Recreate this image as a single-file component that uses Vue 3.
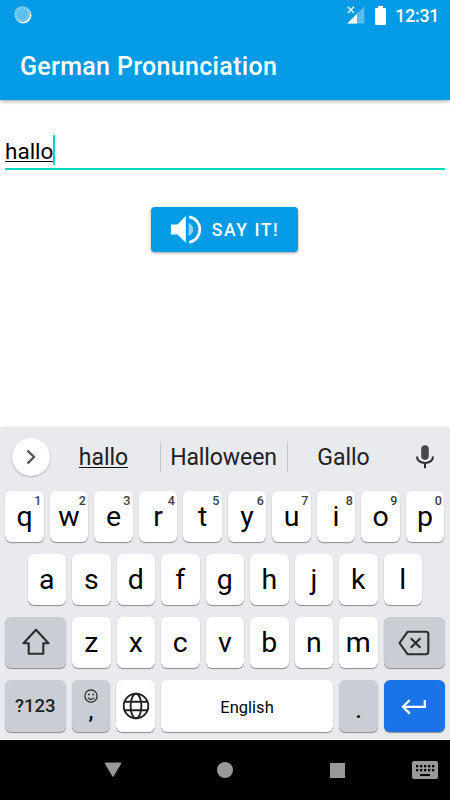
<script setup>
import { ref } from 'vue'

const text = ref('hallo')

const suggestions = ['hallo', 'Halloween', 'Gallo']

const topRow = [...'qwertyuiop'].map((letter, i) => ({ letter, hint: (i + 1) % 10 }))
const middleRow = [...'asdfghjkl']
const bottomRow = [...'zxcvbnm']

// keyboard dots in the nav bar icon
const dots = []
for (let row = 0; row < 2; row++) {
  for (let col = 0; col < 5; col++) {
    dots.push({ x: 4 + col * 4, y: 4 + row * 4 })
  }
}

const type = (letter) => {
  text.value += letter
}

const backspace = () => {
  text.value = text.value.slice(0, -1)
}
</script>

<template>
  <div class="phone">
    <header class="top">
      <div class="status">
        <svg class="sync" width="18" height="18" viewBox="0 0 18 18">
          <circle cx="9.2" cy="9.3" r="8.2" fill="#fff" />
          <circle cx="8.2" cy="8.2" r="8" fill="#5cbff1" />
          <circle cx="8.2" cy="8.2" r="6.7" fill="none" stroke="#a5dbf8" stroke-width="2.2" stroke-dasharray="1 1.6" />
        </svg>
        <svg class="signal" width="18" height="18" viewBox="0 0 18 18">
          <path d="M17.3 0.5V17.5H0.3Z" fill="#58bdf2" />
          <path d="M10 7.8V17.5H0.3Z" fill="#fff" />
          <path d="M0 0H8V6.5L6.5 8H0Z" fill="#039be5" />
          <path d="M0.8 0.8L7 7M7 0.8L0.8 7" stroke="#fff" stroke-width="1.3" />
        </svg>
        <svg class="battery" width="11" height="19" viewBox="0 0 11 19">
          <path d="M3 0H8V2H10Q11 2 11 3V18Q11 19 10 19H1Q0 19 0 18V3Q0 2 1 2H3Z" fill="#fff" />
        </svg>
        <span class="clock">12:31</span>
      </div>
      <h1>German Pronunciation</h1>
    </header>

    <main>
      <div class="field">
        <span class="typed">{{ text }}</span>
        <span class="cursor"></span>
      </div>
      <button class="say">
        <svg width="32" height="30" viewBox="0 0 32 30">
          <path d="M1 9.5H7.5L15.8 1V27.8L7.5 19.5H1Z" fill="#fff" />
          <path d="M18.7 7.8Q23.2 10.5 23.2 14.6T18.7 21.4Z" fill="#8fd3f7" />
          <path d="M19.3 1.8C26 3.2 29.8 8.6 29.8 14.6S26 26 19.3 27.4" fill="none" stroke="#fff" stroke-width="2.8" />
        </svg>
        <span>SAY IT!</span>
      </button>
    </main>

    <section class="keyboard">
      <div class="suggest">
        <span class="expand">
          <svg width="10" height="16" viewBox="0 0 10 16">
            <path d="M1.5 1.5L8 8L1.5 14.5" fill="none" stroke="#505154" stroke-width="2.3" />
          </svg>
        </span>
        <span v-for="(word, i) in suggestions" :key="word" class="word" :class="'w' + i">
          <span>{{ word }}</span>
        </span>
        <svg class="mic" width="18" height="24" viewBox="0 0 18 24">
          <rect x="5.2" y="0.3" width="7.6" height="14.6" rx="3.8" fill="#46474a" />
          <path d="M1 11.5C1 20.2 17 20.2 17 11.5M9 18V23.3" fill="none" stroke="#2b2c2e" stroke-width="2" />
        </svg>
      </div>

      <div class="row">
        <span v-for="key in topRow" :key="key.letter" class="key" @click="type(key.letter)">
          {{ key.letter }}<sup>{{ key.hint }}</sup>
        </span>
      </div>
      <div class="row">
        <span v-for="letter in middleRow" :key="letter" class="key" @click="type(letter)">{{ letter }}</span>
      </div>
      <div class="row">
        <span class="key wide gray">
          <svg width="30" height="28" viewBox="0 0 30 28">
            <path d="M15 1.8L27.5 15.3H22.3V25.7H7.7V15.3H2.5Z" fill="none" stroke="#2b2c2e" stroke-width="2.1" stroke-linejoin="round" />
          </svg>
        </span>
        <span v-for="letter in bottomRow" :key="letter" class="key" @click="type(letter)">{{ letter }}</span>
        <span class="key wide gray" @click="backspace">
          <svg class="delete" width="32" height="26" viewBox="0 0 32 26">
            <path d="M9.5 1.8H28Q30.3 1.8 30.3 4V22Q30.3 24.2 28 24.2H9.5L1.5 13Z" fill="none" stroke="#2b2c2e" stroke-width="2.1" stroke-linejoin="round" />
            <path d="M12.8 8.2L22.4 17.8M22.4 8.2L12.8 17.8" stroke="#2b2c2e" stroke-width="2.1" />
          </svg>
        </span>
      </div>
      <div class="row last">
        <span class="key wide gray symbols">?123</span>
        <span class="key gray comma">
          <svg width="14" height="14" viewBox="0 0 14 14">
            <circle cx="7" cy="7" r="6.1" fill="none" stroke="#222" stroke-width="1.2" />
            <circle cx="4.8" cy="5.4" r="0.9" fill="#222" />
            <circle cx="9.2" cy="5.4" r="0.9" fill="#222" />
            <path d="M3.9 8.6Q7 12 10.1 8.6" fill="none" stroke="#222" stroke-width="1.2" />
          </svg>
          <span>,</span>
        </span>
        <span class="key">
          <svg width="28" height="28" viewBox="0 0 28 28" fill="none" stroke="#222" stroke-width="1.9">
            <circle cx="14" cy="14" r="12.3" />
            <ellipse cx="14" cy="14" rx="5.4" ry="12.3" />
            <path d="M3 9.7H25M3 18.3H25" />
          </svg>
        </span>
        <span class="key space" @click="type(' ')">English</span>
        <span class="key gray period">.</span>
        <span class="key wide enter">
          <svg width="26" height="18" viewBox="0 0 26 18">
            <path d="M23.8 2V8.8H2.5M8.8 2L2 8.8L8.8 15.6" fill="none" stroke="#fff" stroke-width="2.3" />
          </svg>
        </span>
      </div>
    </section>

    <nav>
      <svg width="18" height="16" viewBox="0 0 18 16">
        <path d="M1 1H17L9 14.5Z" fill="#999" stroke="#999" stroke-linejoin="round" />
      </svg>
      <span class="home"></span>
      <span class="recent"></span>
      <svg class="ime" width="26" height="18" viewBox="0 0 26 18">
        <rect width="26" height="18" rx="2" fill="#999" />
        <rect v-for="dot in dots" :key="dot.x + '-' + dot.y" :x="dot.x" :y="dot.y" width="2.3" height="2.3" fill="#000" />
        <rect x="8" y="13" width="10" height="2" fill="#000" />
      </svg>
    </nav>
  </div>
</template>

<style>
body {
  margin: 0;
}
</style>

<style scoped>
.phone {
  width: 450px;
  height: 800px;
  display: flex;
  flex-direction: column;
  overflow: hidden;
  background: #fff;
  font-family: Roboto, sans-serif;
}
svg {
  display: block;
  flex: none;
}
.top {
  height: 100px;
  background: #039be5;
  color: #fff;
  box-shadow: 0 1px 4px rgba(0, 0, 0, 0.4);
}
.status {
  height: 32px;
  display: flex;
  align-items: center;
  padding: 0 11px 0 14px;
}
.sync {
  margin-right: auto;
  margin-top: -2px;
}
.signal {
  margin: -2px 10px 0 0;
}
.battery {
  margin: -2px 9px 0 0;
}
.clock {
  font-size: 17.6px;
  font-weight: 500;
  line-height: 32px;
  letter-spacing: -0.2px;
}
h1 {
  margin: 0;
  padding-left: 20px;
  font-size: 25px;
  font-weight: 500;
  line-height: 69px;
  letter-spacing: 0.32px;
}
main {
  flex: 1;
  display: flex;
  flex-direction: column;
  align-items: center;
}
.field {
  width: 440px;
  height: 33px;
  margin-top: 35px;
  display: flex;
  border-bottom: 2px solid #00d7c0;
}
.typed {
  height: 26px;
  font-size: 22.5px;
  line-height: 32px;
  border-bottom: 1px solid #000;
}
.cursor {
  width: 2px;
  height: 30px;
  background: #00d7c0;
}
.say {
  width: 147px;
  height: 45px;
  margin: 37px 0.4px 0 0;
  padding: 0 0 0 18.5px;
  display: flex;
  align-items: center;
  gap: 10px;
  border: 0;
  border-radius: 4px;
  background: #039be5;
  color: #fff;
  box-shadow: 0 1px 3px rgba(0, 0, 0, 0.4);
  font-family: inherit;
  font-size: 17.5px;
  font-weight: 500;
  letter-spacing: 1.6px;
  white-space: nowrap;
}
.keyboard {
  height: 311px;
  background: #e8eaed;
  border-bottom: 1px solid #fff;
  box-shadow: 0 0 3px rgba(60, 50, 20, 0.25);
}
.suggest {
  height: 57px;
  display: flex;
  align-items: center;
  padding: 0 16px 0 12px;
  margin-bottom: 6px;
}
.expand {
  width: 38px;
  height: 38px;
  display: flex;
  align-items: center;
  justify-content: center;
  border-radius: 50%;
  background: #fff;
  box-shadow: 0 1px 2px rgba(0, 0, 0, 0.25);
}
.word {
  height: 30px;
  display: flex;
  justify-content: center;
  color: #202124;
  font-size: 23px;
  line-height: 31px;
}
.w0 {
  width: 107px;
  margin-right: 2.5px;
}
.w0 span {
  height: 25px;
  border-bottom: 1px solid #111;
}
.w1 {
  width: 126px;
  border: solid #c4c6ca;
  border-width: 0 1px;
  letter-spacing: -0.1px;
}
.w2 {
  width: 112px;
}
.mic {
  margin-left: auto;
}
.row {
  height: 50.5px;
  display: flex;
  justify-content: center;
  gap: 6px;
  padding-right: 0.4px;
  margin-bottom: 12.5px;
}
.key {
  position: relative;
  width: 38.5px;
  display: flex;
  align-items: center;
  justify-content: center;
  box-sizing: border-box;
  border-radius: 6px;
  background: #fff;
  box-shadow: 0 1px 1px rgba(0, 0, 0, 0.4);
  color: #000;
  font-size: 28.5px;
  line-height: 49px;
  cursor: pointer;
}
sup {
  position: absolute;
  top: 2px;
  right: 2.5px;
  color: #3c4043;
  font-size: 12.5px;
  font-weight: 500;
  line-height: 15px;
}
.wide {
  width: 61px;
}
.gray {
  background: #cbcdd4;
}
.delete {
  margin-top: 2px;
}
.last {
  height: 51.5px;
}
.symbols {
  padding-top: 2px;
  color: #202124;
  font-size: 18.5px;
  font-weight: 500;
}
.comma {
  flex-direction: column;
  justify-content: flex-start;
  padding-top: 9px;
}
.comma span {
  font-size: 22px;
  font-weight: 500;
  line-height: 18px;
}
.space {
  width: 172.5px;
  padding-top: 3px;
  font-size: 16.5px;
}
.period {
  font-size: 22px;
  font-weight: 500;
  padding-top: 10px;
}
.enter {
  padding-top: 3px;
  background: #1a73e8;
}
nav {
  height: 60px;
  display: flex;
  align-items: center;
  padding: 0 12px 0 103.5px;
  background: #000;
}
.home {
  width: 16px;
  height: 16px;
  margin: 0 105px 0 95.5px;
  border-radius: 50%;
  background: #999;
}
.recent {
  width: 15px;
  height: 15px;
  margin-left: -8px;
  background: #999;
}
.ime {
  margin-left: auto;
}
</style>
